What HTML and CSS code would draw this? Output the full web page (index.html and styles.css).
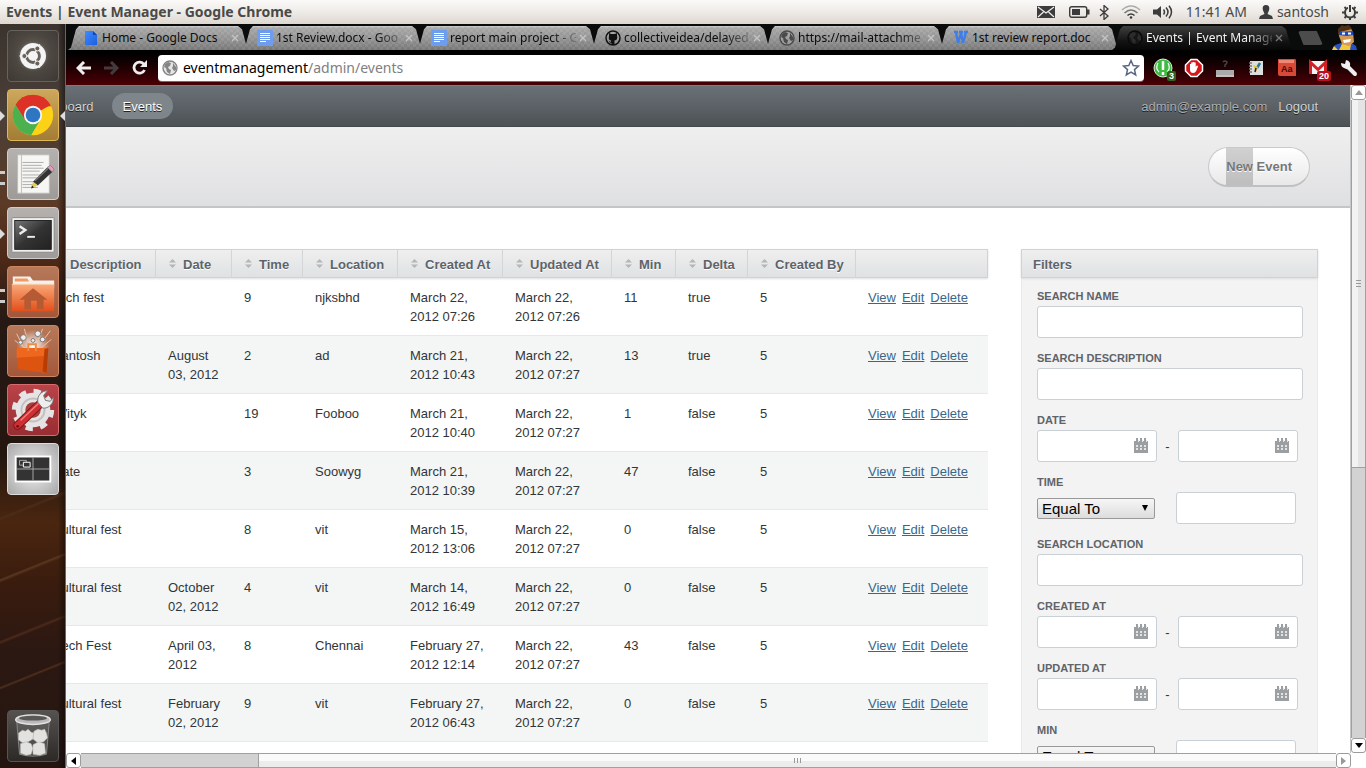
FILE: index.html
```html
<!DOCTYPE html>
<html lang="en">
<head>
<meta charset="utf-8">
<title>Events | Event Manager</title>
<link rel="stylesheet" href="styles.css">
</head>
<body>
<svg class="defs" aria-hidden="true">
  <defs>
    <linearGradient id="bluedoc" x1="0" y1="0" x2="1" y2="1"><stop offset="0" stop-color="#3f8bff"/><stop offset="1" stop-color="#1c5fe0"/></linearGradient>
    <linearGradient id="orange" x1="0" y1="0" x2="0" y2="1"><stop offset="0" stop-color="#f9a878"/><stop offset="1" stop-color="#e2501a"/></linearGradient>
    <linearGradient id="screen" x1="0" y1="0" x2="1" y2="1"><stop offset="0" stop-color="#777"/><stop offset=".5" stop-color="#333"/><stop offset="1" stop-color="#222"/></linearGradient>
    <radialGradient id="burst"><stop offset="0" stop-color="#fff"/><stop offset="1" stop-color="#fff" stop-opacity="0"/></radialGradient>
  </defs>
  <symbol id="i-cal" viewBox="0 0 14 15"><path d="M0 3h14v12H0z" fill="#9b9fa2"/><path d="M2 0h2v4H2zM6 0h2v4H6zM10 0h2v4h-2z" fill="#9b9fa2"/><path d="M4 2h1v2H4zM8 2h1v2H8zM12 2h1v2h-1z" fill="#e6e8e9"/><path d="M2 7h2v2H2zM6 7h2v2H6zM10 7h2v2h-2zM2 10h2v2H2zM6 10h2v2H6zM10 10h2v2h-2z" fill="#e3e4e5"/></symbol>
  <symbol id="i-globe" viewBox="0 0 16 16"><circle cx="8" cy="8" r="7" fill="#b5b5b5" fill-opacity=".35" stroke="currentColor" stroke-width="1.4"/><path d="M3 4l3-2 3 1-1 3-2 1 1 2 2 1-1 4-3-2-1-4-2-1zM11 3l3 4v3l-2 1-2-3 1-2z" fill="currentColor"/></symbol>
  <symbol id="i-globe-dark" viewBox="0 0 16 16"><circle cx="8" cy="8" r="7" fill="#161616" stroke="#0a0a0a" stroke-width="1.4"/><path d="M3 4l3-2 3 1-1 3-2 1 1 2 2 1-1 4-3-2-1-4-2-1zM11 3l3 4v3l-2 1-2-3 1-2z" fill="#2c2c2c"/></symbol>
  <symbol id="i-doc" viewBox="0 0 16 16"><path d="M0 0h16v16H0z" fill="#6d9eee"/><path d="M3 3.5h10M3 5.5h10M3 7.5h10M3 9.5h10M3 11.5h6" stroke="#fff" stroke-width="1.1"/></symbol>
  <symbol id="i-x" viewBox="0 0 8 8"><path d="M1 1l6 6M7 1L1 7" stroke="currentColor" stroke-width="1.4"/></symbol>
  <symbol id="i-sort" viewBox="0 0 7 9"><path d="M3.5 0L7 3.5H0zM0 5.5h7L3.5 9z" fill="#b4b6b8"/></symbol>
</svg>

<header class="panel">
  <h1 class="panel-title">Events | Event Manager - Google Chrome</h1>
  <div class="indicators">
    <svg class="ind-mail" width="18" height="12" viewBox="0 0 18 12"><path d="M0 0h18v12H0z" fill="#3c3c3c"/><path d="M1 1l8 6 8-6M1 11l5.500-5M17 11l-5.500-5" stroke="#eee" stroke-width="1.200" fill="none"/></svg>
    <svg class="ind-batt" width="21" height="12" viewBox="0 0 21 12"><rect x=".7" y=".7" width="17" height="10.600" rx="2" fill="none" stroke="#3c3c3c" stroke-width="1.400"/><path d="M3 3h8v6H3zM18 3.500h2.500v5H18z" fill="#3c3c3c"/></svg>
    <svg class="ind-bt" width="10" height="15" viewBox="0 0 10 15"><path d="M1 4l8 7-4 3.500v-14L9 4l-8 7" stroke="#3c3c3c" stroke-width="1.300" fill="none"/></svg>
    <svg class="ind-wifi" width="20" height="14" viewBox="0 0 20 14"><g fill="none" stroke-width="1.600"><path d="M1 5q9-8 18 0" stroke="#aaa"/><path d="M3.500 8q6.500-6 13 0" stroke="#777"/><path d="M6.500 10.500q3.500-3 7 0" stroke="#3c3c3c"/></g><circle cx="10" cy="12.500" r="1.300" fill="#3c3c3c"/></svg>
    <svg class="ind-vol" width="20" height="14" viewBox="0 0 20 14"><path d="M0 4.500h4L8 1v12L4 9.500H0z" fill="#3c3c3c"/><path d="M10.500 4.500q2 2.500 0 5M13 2.500q4 4.500 0 9M16 .8q5 6.200 0 12.400" stroke="#3c3c3c" stroke-width="1.500" fill="none"/></svg>
    <span class="clock">11:41 AM</span>
    <svg class="ind-user" width="14" height="14" viewBox="0 0 14 14"><path d="M7 0c4 0 3.800 4 2.500 6.500L8.500 9l4.500 2 1 3H0l1-3 4.500-2-1-2.500C3.200 4 3 0 7 0z" fill="#3c3c3c"/></svg>
    <span class="username">santosh</span>
    <svg class="ind-power" width="16" height="16" viewBox="0 0 16 16"><circle cx="8" cy="8.500" r="5" fill="none" stroke="#3c3c3c" stroke-width="2"/><path d="M8 1v7" stroke="#eeebe7" stroke-width="4"/><path d="M8 1v7M0 8.500h3M13 8.500h3M8 13v3M2.500 3l2 2M13.500 3l-2 2M2.500 14l2-2M13.500 14l-2-2" stroke="#3c3c3c" stroke-width="2"/></svg>
  </div>
</header>

<div class="desktop">
  <nav class="launcher" aria-label="Launcher">
    <button class="tile dash" aria-label="Dash home"><svg viewBox="0 0 52 52"><circle cx="26" cy="26" r="16" fill="url(#burst)" opacity=".5"/><circle cx="26" cy="26" r="13.500" fill="#f4f4f4"/><circle cx="26" cy="26" r="6.700" fill="none" stroke="#68625c" stroke-width="3"/><path d="M26 26L12 26M26 26l7-12M26 26l7 12" stroke="#f4f4f4" stroke-width="1.500"/><g fill="#68625c" stroke="#f4f4f4" stroke-width="1"><circle cx="17" cy="26" r="2.600"/><circle cx="30.500" cy="18.200" r="2.600"/><circle cx="30.500" cy="33.800" r="2.600"/></g></svg></button>
    <button class="tile chrome run active" aria-label="Google Chrome"><svg viewBox="0 0 52 52"><circle cx="26" cy="26" r="21" fill="#fcd116"/><path d="M26 26L7.800 15.500A21 21 0 0 1 44.200 15.500z" fill="#dd3128"/><path d="M26 17h18.800A21 21 0 0 0 7.800 15.500L18 32z" fill="#dd3128"/><path d="M7.800 15.500A21 21 0 0 0 24 47l9-15-7 3-9-5z" fill="#4bb04e"/><circle cx="26" cy="26" r="9.500" fill="#f6f6f6"/><circle cx="26" cy="26" r="7.600" fill="#2f76c2"/></svg></button>
    <button class="tile grey run2" aria-label="Text editor"><svg viewBox="0 0 52 52"><path d="M10 6h33v40H10z" fill="#f6f6f4" stroke="#bbb"/><path d="M14 6v40" stroke="#eaa"/><path d="M15 14h22M15 17h20M15 20h22M15 23h18M15 27h20M15 30h16M15 34h18M15 37h14M15 40h16" stroke="#999" stroke-width=".8"/><path d="M26 34l15-15 5 5-15 14z" fill="#333"/><path d="M28 33l15-14" stroke="#777" stroke-width="1.500"/><path d="M41 19l3-2 4 4-2 3z" fill="#e89bc0" stroke="#777" stroke-width=".7"/><path d="M26 34l-2 7 7-3z" fill="#e6cf55"/><path d="M24 41l1-3 2 2z" fill="#222"/></svg></button>
    <button class="tile grey run" aria-label="Terminal"><svg viewBox="0 0 52 52"><rect x="4" y="10" width="44" height="36" rx="1" fill="#efefef" stroke="#888"/><rect x="7" y="13" width="38" height="30" fill="url(#screen)" stroke="#222"/><path d="M12 19l6 4-6 4" stroke="#eee" stroke-width="2.500" fill="none"/><path d="M20 30h8" stroke="#eee" stroke-width="2"/></svg></button>
    <button class="tile rust run2" aria-label="Home folder"><svg viewBox="0 0 52 52"><path d="M5 10h18l3 4h22v8H5z" fill="#f6f1ed"/><path d="M7 12h13l2 3H7z" fill="#f19a63"/><path d="M4 18h44v28H4z" fill="url(#orange)"/><path d="M26 22l15 12h-4v10h-7v-9h-6v9h-7V34h-5z" fill="#b65a33"/><path d="M4 18h44" stroke="#fbcda9"/></svg></button>
    <button class="tile rust" aria-label="Software centre"><svg viewBox="0 0 52 52"><circle cx="26" cy="21" r="17" fill="url(#burst)"/><path d="M9 8l7 14M17 3l5 18M44 5l-12 16M36 3l-7 18M45 14l-11 9M7 15l11 8" stroke="#f1c1a4" stroke-width="1"/><g stroke="#777" fill="#eee"><circle cx="16" cy="12" r="3"/><circle cx="31" cy="8" r="3"/><circle cx="26" cy="15" r="2"/><circle cx="36" cy="14" r="2.500"/><circle cx="13" cy="17" r="2"/></g><path d="M9 23h33l-2 26-30-4z" fill="#dd5410"/><path d="M9 23h33l-1 8-32 2z" fill="#ed681e"/><path d="M21 26v-7h8v7" fill="none" stroke="#ef8a43" stroke-width="2"/><path d="M38 24l4-1-2 26-4-2z" fill="#b83c05"/></svg></button>
    <button class="tile red" aria-label="System settings"><svg viewBox="0 0 52 52"><circle cx="26" cy="26" r="18" fill="#e5e3e3"/><circle cx="26" cy="26" r="19.500" fill="none" stroke="#e5e3e3" stroke-width="5" stroke-dasharray="7.500 7.815"/><circle cx="26" cy="26" r="12" fill="none" stroke="#c4c0c0" stroke-width="2"/><circle cx="26" cy="26" r="8" fill="#a5403f"/><path d="M10 42l25-24" stroke="#7a1717" stroke-width="9" stroke-linecap="round"/><path d="M10 42l24-23" stroke="#cf2f33" stroke-width="7" stroke-linecap="round"/><path d="M13 37l19-18" stroke="#ef8180" stroke-width="1.500"/><path d="M31 18c-1-7 4-12 10-12l-4 5 2 5 5 1 3-4c1 6-5 12-11 11z" fill="#eee" stroke="#777"/><circle cx="10" cy="43" r="1.500" fill="#711"/></svg></button>
    <button class="tile silver" aria-label="Workspace switcher"><svg viewBox="0 0 52 52"><rect x="8" y="13" width="36" height="26" fill="#333" stroke="#fff" stroke-width="2"/><path d="M26 14v24M9 26h34" stroke="#aaa"/><path d="M12 17h7v5h-7z" fill="none" stroke="#aaa"/><path d="M16 19h7v5h-7z" fill="#333" stroke="#fff"/></svg></button>
    <button class="tile trash" aria-label="Trash"><svg viewBox="0 0 52 52"><path d="M9 10l3 35q14 4 28 0l3-35z" fill="#888" fill-opacity=".3" stroke="#999" stroke-width=".8"/><g fill="#e2e2e0" stroke="#bdbdba" stroke-width=".6"><path d="M11 23l4-3 3 1 3-2 3 3 3 1-1 6-5 3-6 1-4-3z"/><path d="M27 21l4-2 4 1 3-1 2 4 1 5-4 4-6 1-5-4z"/><path d="M13 34l6-2 5 2 2 5-2 6-5 1-6-2z"/><path d="M26 35l6-3 6 2 1 10-6 2-7-1z"/></g><ellipse cx="26" cy="9" rx="18" ry="5" fill="#b9b9b9" stroke="#e2e2e2" stroke-width="1.500"/><ellipse cx="26" cy="7.500" rx="14.500" ry="2.500" fill="#5a5856"/></svg></button>
  </nav>

  <div class="browser">
    <div class="tabs">
      <div class="tab"><svg class="fav" viewBox="0 0 16 16"><path d="M2 1h8l4 4v10H2z" fill="url(#bluedoc)"/><path d="M10 1l4 4h-4z" fill="#1546a8"/></svg><span class="tab-name">Home - Google Docs</span><button class="close" aria-label="Close tab"><svg><use href="#i-x"/></svg></button></div>
      <div class="tab"><svg class="fav"><use href="#i-doc"/></svg><span class="tab-name">1st Review.docx - Goo</span><button class="close" aria-label="Close tab"><svg><use href="#i-x"/></svg></button></div>
      <div class="tab"><svg class="fav"><use href="#i-doc"/></svg><span class="tab-name">report main project - G</span><button class="close" aria-label="Close tab"><svg><use href="#i-x"/></svg></button></div>
      <div class="tab"><svg class="fav" viewBox="0 0 16 16"><circle cx="8" cy="8" r="7" fill="none" stroke="#111" stroke-width="1.500"/><path d="M4 3l2 1h4l2-1v3q1 4-2.500 4.500V15h-3v-2Q4 13 4 11l2 1v-1.500Q3 10 4 6z" fill="#111"/></svg><span class="tab-name">collectiveidea/delayed</span><button class="close" aria-label="Close tab"><svg><use href="#i-x"/></svg></button></div>
      <div class="tab"><svg class="fav globe"><use href="#i-globe"/></svg><span class="tab-name">https://mail-attachme</span><button class="close" aria-label="Close tab"><svg><use href="#i-x"/></svg></button></div>
      <div class="tab"><svg class="fav" viewBox="0 0 16 16"><path d="M1 2h4M6 2h4M11 2h4M3 2l2 11 3-10 2 10 3-11" fill="none" stroke="#3f7ee8" stroke-width="2.400"/></svg><span class="tab-name whole">1st review report.doc</span><button class="close" aria-label="Close tab"><svg><use href="#i-x"/></svg></button></div>
      <div class="tab current"><svg class="fav"><use href="#i-globe-dark"/></svg><span class="tab-name">Events | Event Manage</span><button class="close" aria-label="Close tab"><svg><use href="#i-x"/></svg></button></div>
      <button class="newtab" aria-label="New tab"></button>
      <svg class="avatar" width="26" height="25" viewBox="0 0 26 25"><path d="M1 25l3-5 6-2 9-1 6 4 1 4z" fill="#2a50c8"/><path d="M8 25l3-6h9l-1 6zM1 25l2-4 4 4z" fill="#f1c93b"/><path d="M9 3l10-1 3 5 1 10-5 4-7-2-3-8z" fill="#d39a55"/><path d="M7 4l4-4 2 1 5-1 3 4-12 3-2 4z" fill="#4d2f14"/><path d="M8 7l14-1v4l-6 1-8-1z" fill="#2049b8"/><path d="M11 7.500h3v2h-3zM17 7.500h3v2h-3z" fill="#fff"/><path d="M12 15l8-1-1 3-6 1z" fill="#fff"/></svg>
    </div>

    <div class="toolbar">
      <button class="tool" aria-label="Back"><svg width="15" height="14" viewBox="0 0 15 14"><path d="M8 1L2 7l6 6M2 7h13" stroke="#eee" stroke-width="3" fill="none"/></svg></button>
      <button class="tool" aria-label="Forward"><svg width="15" height="14" viewBox="0 0 15 14"><path d="M7 1l6 6-6 6M13 7H0" stroke="#443c3c" stroke-width="3" fill="none"/></svg></button>
      <button class="tool" aria-label="Reload"><svg width="15" height="15" viewBox="0 0 15 15"><path d="M12 4.500A5.500 5.500 0 1 0 12.500 10" stroke="#eee" stroke-width="2.800" fill="none"/><path d="M15 0v7H8z" fill="#eee"/></svg></button>
      <div class="omnibox">
        <svg class="fav globe"><use href="#i-globe"/></svg>
        <div class="url" role="textbox" aria-label="Address">eventmanagement<span>/admin/events</span></div>
        <svg width="18" height="18" viewBox="0 0 18 18"><path d="M9 1.500l2.200 5 5.300.5-4 3.600 1.200 5.400L9 13.200 4.300 16l1.200-5.400-4-3.600 5.300-.5z" fill="none" stroke="#5a6784" stroke-width="1.500"/></svg>
      </div>
      <div class="exts">
        <button class="ext" aria-label="Alerts"><svg viewBox="0 0 20 20"><circle cx="10" cy="10" r="9" fill="#3fba43" stroke="#d9f3d9"/><path d="M10 3v9M10 14v3" stroke="#fff" stroke-width="2.500"/><path d="M5 5q-3 5 1 9M15 5q3 5-1 9" fill="none" stroke="#fff" stroke-width="1.200"/></svg><b class="badge green">3</b></button>
        <button class="ext" aria-label="Ad blocker"><svg viewBox="0 0 20 20"><path d="M7 1.500h6L18.500 7v6L13 18.500H7L1.500 13V7z" fill="#d5161b" stroke="#fff" stroke-width="1.500"/><path d="M6 10V6h1.200v3V4.500h1.500V9 4h1.500v5-4.500h1.500V9l1-1.500 1.500.5-2 5q-1 2-3 2-3 0-3.200-3z" fill="#fff"/></svg></button>
        <button class="ext" aria-label="Unknown device"><svg viewBox="0 0 20 20"><path d="M1 12h18v5H1z" fill="#aaa"/><path d="M1 18h18" stroke="#fff" stroke-width="1.500"/><path d="M8 4q2-2 4 0 0 2-2 3v2" fill="none" stroke="#444" stroke-width="1.500"/></svg></button>
        <button class="ext" aria-label="Notes"><svg viewBox="0 0 20 20"><path d="M4 3h13v14H4z" fill="#ddd"/><path d="M3 5h3M3 8h3M3 11h3M3 14h3" stroke="#777" stroke-width="1.500"/><path d="M14 5l-3 5" stroke="#247a9e" stroke-width="2.500"/><path d="M7 7l5 2-2 5z" fill="#e8c830"/><path d="M10 10l-1 4" stroke="#222" stroke-width="1.500"/></svg></button>
        <button class="ext" aria-label="Dictionary"><svg viewBox="0 0 20 20"><path d="M1 1h17q1 0 1 2v15H3q-2 0-2-2z" fill="#d84a36"/><path d="M2 2h15v3H2z" fill="#f08774"/></svg><span class="aa">Aa</span></button>
        <button class="ext" aria-label="Gmail"><svg viewBox="0 0 20 20"><path d="M1 3h18v13H1z" fill="#f4f4f4"/><path d="M2.500 16V4.500l7.500 7 7.500-7V16" fill="none" stroke="#d22126" stroke-width="3"/></svg><b class="badge">20</b></button>
        <button class="ext" aria-label="Menu"><svg viewBox="0 0 20 20"><path d="M8 8l8 8" stroke="#eee" stroke-width="4" stroke-linecap="round"/><path d="M2 5l4 1 1-4q5 1 4 6t-6 2Q2 9 2 5z" fill="#eee"/></svg></button>
      </div>
    </div>

    <div class="view">
      <div class="page">
        <header class="site-header">
          <nav class="site-nav"><a href="#">Dashboard</a><a href="#" class="here">Events</a></nav>
          <div class="account"><a href="#" class="mail">admin@example.com</a><a href="#">Logout</a></div>
        </header>
        <div class="title-bar"><button class="new-event"><span class="picked">New</span>&nbsp;Event</button></div>
        <main class="main">
          <div class="list">
            <table>
              <colgroup><col class="c-desc"><col class="c-date"><col class="c-time"><col class="c-loc"><col class="c-created"><col class="c-updated"><col class="c-min"><col class="c-delta"><col class="c-by"><col></colgroup>
              <thead><tr>
                <th><svg><use href="#i-sort"/></svg>Description</th><th><svg><use href="#i-sort"/></svg>Date</th><th><svg><use href="#i-sort"/></svg>Time</th><th><svg><use href="#i-sort"/></svg>Location</th><th><svg><use href="#i-sort"/></svg>Created At</th><th><svg><use href="#i-sort"/></svg>Updated At</th><th><svg><use href="#i-sort"/></svg>Min</th><th><svg><use href="#i-sort"/></svg>Delta</th><th><svg><use href="#i-sort"/></svg>Created By</th><th></th>
              </tr></thead>
              <tbody>
                <tr><td>tech fest</td><td></td><td>9</td><td>njksbhd</td><td>March 22, 2012 07:26</td><td>March 22, 2012 07:26</td><td>11</td><td>true</td><td>5</td><td class="acts"><a href="#">View</a><a href="#">Edit</a><a href="#">Delete</a></td></tr>
                <tr><td>santosh</td><td>August 03, 2012</td><td>2</td><td>ad</td><td>March 21, 2012 10:43</td><td>March 22, 2012 07:27</td><td>13</td><td>true</td><td>5</td><td class="acts"><a href="#">View</a><a href="#">Edit</a><a href="#">Delete</a></td></tr>
                <tr><td>IVityk</td><td></td><td>19</td><td>Fooboo</td><td>March 21, 2012 10:40</td><td>March 22, 2012 07:27</td><td>1</td><td>false</td><td>5</td><td class="acts"><a href="#">View</a><a href="#">Edit</a><a href="#">Delete</a></td></tr>
                <tr><td>date</td><td></td><td>3</td><td>Soowyg</td><td>March 21, 2012 10:39</td><td>March 22, 2012 07:27</td><td>47</td><td>false</td><td>5</td><td class="acts"><a href="#">View</a><a href="#">Edit</a><a href="#">Delete</a></td></tr>
                <tr><td>cultural fest</td><td></td><td>8</td><td>vit</td><td>March 15, 2012 13:06</td><td>March 22, 2012 07:27</td><td>0</td><td>false</td><td>5</td><td class="acts"><a href="#">View</a><a href="#">Edit</a><a href="#">Delete</a></td></tr>
                <tr><td>cultural fest</td><td>October 02, 2012</td><td>4</td><td>vit</td><td>March 14, 2012 16:49</td><td>March 22, 2012 07:27</td><td>0</td><td>false</td><td>5</td><td class="acts"><a href="#">View</a><a href="#">Edit</a><a href="#">Delete</a></td></tr>
                <tr><td>Tech Fest</td><td>April 03, 2012</td><td>8</td><td>Chennai</td><td>February 27, 2012 12:14</td><td>March 22, 2012 07:27</td><td>43</td><td>false</td><td>5</td><td class="acts"><a href="#">View</a><a href="#">Edit</a><a href="#">Delete</a></td></tr>
                <tr><td>cultural fest</td><td>February 02, 2012</td><td>9</td><td>vit</td><td>February 27, 2012 06:43</td><td>March 22, 2012 07:27</td><td>0</td><td>false</td><td>5</td><td class="acts"><a href="#">View</a><a href="#">Edit</a><a href="#">Delete</a></td></tr>
              </tbody>
            </table>
          </div>
          <aside class="filters">
            <h2>Filters</h2>
            <form>
              <div class="field"><label for="f-name">Search Name</label><input id="f-name" type="text"></div>
              <div class="field"><label for="f-desc">Search Description</label><input id="f-desc" type="text"></div>
              <div class="field"><label for="f-date">Date</label><div class="range"><span class="date"><input id="f-date" type="text"><svg><use href="#i-cal"/></svg></span><span class="dashmark">-</span><span class="date"><input type="text" aria-label="Date to"><svg><use href="#i-cal"/></svg></span></div></div>
              <div class="field"><label for="f-time">Time</label><div class="compare"><span class="drop"><select id="f-time"><option>Equal To</option></select></span><input type="text" aria-label="Time value"></div></div>
              <div class="field"><label for="f-loc">Search Location</label><input id="f-loc" type="text"></div>
              <div class="field"><label for="f-cr">Created At</label><div class="range"><span class="date"><input id="f-cr" type="text"><svg><use href="#i-cal"/></svg></span><span class="dashmark">-</span><span class="date"><input type="text" aria-label="Created to"><svg><use href="#i-cal"/></svg></span></div></div>
              <div class="field"><label for="f-up">Updated At</label><div class="range"><span class="date"><input id="f-up" type="text"><svg><use href="#i-cal"/></svg></span><span class="dashmark">-</span><span class="date"><input type="text" aria-label="Updated to"><svg><use href="#i-cal"/></svg></span></div></div>
              <div class="field"><label for="f-min">Min</label><div class="compare"><span class="drop"><select id="f-min"><option>Equal To</option></select></span><input type="text" aria-label="Min value"></div></div>
            </form>
          </aside>
        </main>
      </div>
      <div class="vbar">
        <span class="cap"><svg width="8" height="5" viewBox="0 0 8 5"><path d="M4 0l4 5H0z" fill="#999"/></svg></span>
        <span class="thumb"><i></i><i></i><i></i></span>
        <span class="track"></span>
        <span class="cap"><svg width="8" height="5" viewBox="0 0 8 5"><path d="M0 0h8L4 5z" fill="#000"/></svg></span>
      </div>
      <div class="hbar">
        <span class="cap"><svg width="5" height="8" viewBox="0 0 5 8"><path d="M5 0v8L0 4z" fill="#000"/></svg></span>
        <span class="track"></span>
        <span class="thumb"><i></i><i></i><i></i></span>
        <span class="cap"><svg width="5" height="8" viewBox="0 0 5 8"><path d="M0 0v8l5-4z" fill="#999"/></svg></span>
      </div>
      <div class="corner"></div>
    </div>
  </div>
</div>
</body>
</html>
```
FILE: styles.css
```css
* { box-sizing: border-box; }
body { margin: 0; height: 100vh; display: flex; flex-direction: column; overflow: hidden; background: #fff; font: 13px/19px "Liberation Sans", Arial, sans-serif; color: #323537; }
button { font: inherit; padding: 0; border: 0; background: none; color: inherit; display: block; }
svg { display: block; flex: none; }
.defs { position: absolute; width: 0; height: 0; }

/* Desktop panel */
.panel { flex: none; height: 24px; display: flex; align-items: center; justify-content: space-between; padding: 0 8px 0 6px; background: linear-gradient(#fbfaf9, #eeebe7 50%, #ded7cf); font: 14px/24px "Noto Sans", sans-serif; color: #4a4a48; }
.panel-title { margin: 0; font: bold 14px/24px "Noto Sans", sans-serif; color: #4a4a48; }
.indicators { display: flex; align-items: center; }
.ind-mail { margin-right: 14px; }
.ind-batt { margin-right: 9px; }
.ind-bt { margin-right: 12px; }
.ind-wifi { margin-right: 12px; }
.ind-vol { margin-right: 13px; }
.clock { margin-right: 12px; }
.ind-user { margin-right: 4px; }
.username { margin-right: 13px; }

.desktop { flex: 1; min-height: 0; display: flex; }

/* Launcher */
.launcher { flex: none; width: 66px; padding: 6px 0 6px 7px; display: flex; flex-direction: column; gap: 7px; border-right: 1px solid #6e6560;
  background:
    linear-gradient(90deg, transparent 58px, rgba(10, 5, 3, .5)),
    linear-gradient(158deg, transparent 64%, #4c2c18 64.200%, transparent 64.600%, transparent 72%, #5a371f 72.200%, transparent 72.600%, transparent 80%, #4b2a1b 80.300%, transparent 80.600%, transparent 86%, #4f2e1c 86.200%, transparent 86.500%),
    linear-gradient(#3b332e 0, #4a3f37 12%, #5b3a26 24%, #4b2817 32%, #261914 40%, #24160f 58%, #4a2610 67%, #3a1c0e 75%, #2c1812 84%, #241511); }
.tile { flex: none; position: relative; width: 52px; height: 52px; border-radius: 4px; border: 1px solid #aaa; }
.tile svg { width: 50px; height: 50px; }
.dash { border-color: #68625d; background: radial-gradient(circle at 50% 45%, #6d665f, #4d4742 50%, #3d3833); }
.chrome { border-color: #e0b657; background: linear-gradient(#cda75c, #a37d34); }
.grey { border-color: #cfcdcc; background: linear-gradient(#b4b1af, #9e9a98); }
.rust { border-color: #cd8661; background: linear-gradient(#b6795a, #a3573a); }
.red { border-color: #d76a6d; background: linear-gradient(#b94348, #982d33); }
.silver { border-color: #ddd; background: radial-gradient(#f3f3f3, #a7a7a7); }
.trash { margin-top: auto; border-color: #555; background: linear-gradient(#55524f, #2c2927); }
.run::before, .run2::before { content: ""; position: absolute; left: -8px; top: 21px; border: 5px solid transparent; border-left-color: #ddd; border-right: 0; }
.run2::before { top: 22px; width: 5px; height: 8px; border: solid #ccc; border-width: 3px 0; }
.active::after { content: ""; position: absolute; right: -7px; top: 21px; border: 5px solid transparent; border-right-color: #ddd; border-left: 0; }

/* Browser chrome */
.browser { flex: 1; min-width: 0; display: flex; flex-direction: column; }
.tabs { flex: none; height: 26px; padding: 2px 9px 0 2px; display: flex; background: #0a0c0b; font: 12px/22px "Noto Sans", sans-serif; color: #0c0c0c; }
.tab { flex: 0 1 182px; min-width: 0; height: 24px; margin-right: -8px; padding: 0 11px 0 15px; display: flex; align-items: center; gap: 3px; clip-path: polygon(0 100%, 3px 90%, 8px 14%, 11px 0, calc(100% - 12px) 0, calc(100% - 8px) 14%, calc(100% - 3px) 90%, 100% 100%);
  background: linear-gradient(rgba(255, 255, 255, .4), transparent 2px), repeating-conic-gradient(rgba(255, 255, 255, .08) 0 25%, transparent 0 50%) 0 0 / 6px 6px, linear-gradient(#a9aaa9, #8e8f8e 60%, #777); }
.current { background: linear-gradient(#3f4040, #151515 60%, #060606); color: #f1f1f1; }
.fav { width: 16px; height: 16px; }
.globe { color: #4b4b4b; }
.tab-name { flex: 1; min-width: 0; white-space: nowrap; mask-image: linear-gradient(90deg, #000 80%, rgba(0, 0, 0, .2)); }
.tab:first-child .tab-name, .tab-name.whole { mask-image: none; }
.close { flex: none; color: #c4c4c4; }
.current .close { color: #777; }
.close svg { width: 8px; height: 8px; }
.newtab { flex: none; width: 25px; height: 14px; margin: 5px 0 0 12px; background: #4c4c4c; border-radius: 3px; clip-path: polygon(0 0, 75% 0, 100% 100%, 22% 100%); }
.avatar { margin: -1px 0 0 auto; }
.toolbar { flex: none; height: 35px; display: flex; align-items: center; padding: 0 7px 0 10px; background: linear-gradient(#000 10%, #160002 40%, #4a0006); }
.tool { margin-right: 13px; }
.tool + .tool + .tool { margin-right: 11px; }
.omnibox { flex: 1; min-width: 0; height: 26px; display: flex; align-items: center; gap: 5px; padding: 0 4px; border-radius: 4px; background: #fff; box-shadow: 0 1px 0 #8d6065; }
.omnibox .globe { color: #858585; }
.url { flex: 1; font: 14px/24px "Noto Sans", sans-serif; color: #000; white-space: nowrap; }
.url span { color: #808080; }
.exts { display: flex; gap: 11px; padding-left: 9px; }
.ext { position: relative; width: 20px; height: 20px; }
.ext svg { width: 20px; height: 20px; }
.badge { position: absolute; right: -3px; bottom: -3px; padding: 0 2px; border-radius: 2px; background: #b80f22; color: #fff; font: bold 9px/10px "Liberation Sans", sans-serif; }
.green { background: #35601f; }
.aa { position: absolute; left: 4px; top: 6px; color: #3c0906; font: bold 9px/10px "Liberation Sans", sans-serif; }

/* Viewport and scroll bars */
.view { flex: 1; min-height: 0; display: grid; grid-template: minmax(0, 1fr) 15px / minmax(0, 1fr) 15px; }
.page { overflow: hidden; border-right: 1px solid #c4c6c7; }
.vbar, .hbar { display: flex; background: #fff; }
.vbar { flex-direction: column; }
.cap { flex: none; width: 15px; height: 15px; display: flex; align-items: center; justify-content: center; border: 1px solid #9b9b9b; border-radius: 3px; background: #fff; }
.vbar .track { flex: 270; border: solid #a0a0a0; border-width: 1px 1px 0; background: #d2d2d2; }
.vbar .thumb { flex: 368; flex-direction: column; border: solid #a0a0a0; border-width: 0 1px; background: linear-gradient(90deg, #f2f2f2 50%, #e4e4e4 50%); }
.hbar .track { flex: 177; border: solid #a0a0a0; border-width: 1px 1px 1px 0; background: #d2d2d2; }
.hbar .thumb { flex: 1078; border: solid #a0a0a0; border-width: 1px 0; background: linear-gradient(#fafafa 50%, #ececec 50%); }
.thumb { display: flex; align-items: center; justify-content: center; gap: 2px; }
.vbar i { width: 5px; height: 1px; background: #999; }
.hbar i { width: 1px; height: 5px; background: #999; }
.corner { background: #fff; }

/* Admin page */
.site-header { height: 42px; display: flex; align-items: center; justify-content: space-between; padding: 0 32px 0 0; border-top: 1px solid #777d82; border-bottom: 1px solid #45494c; background: linear-gradient(#6a7176, #4d5256); }
.site-header a { color: #d0d3d5; text-decoration: none; text-shadow: 0 1px 0 #222; }
.site-nav { display: flex; align-items: center; gap: 18px; margin-left: -36px; }
.site-header .here { padding: 4px 11px 3px; border-radius: 13px; background: #7f868b; color: #fff; }
.account { display: flex; gap: 11px; }
.site-header .mail { color: #aaadaf; }
.title-bar { height: 81px; display: flex; align-items: center; justify-content: flex-end; padding: 0 40px 0 0; border-top: 1px solid #eee; border-bottom: 2px solid #c3c5c6; background: linear-gradient(#efefef, #dfe0e2); }
.new-event { height: 40px; padding: 0 17px; display: flex; align-items: center; border: 1px solid #c8c9ca; border-bottom: 2px solid #bfc0c1; border-radius: 20px; background: linear-gradient(#fff, #e8e8e8); color: #777; font-weight: bold; text-shadow: 0 1px 0 #fff; }
.picked { padding: 9px 0; background: rgba(0, 0, 0, .18); }
.main { display: flex; align-items: flex-start; gap: 33px; padding: 41px 32px 0 0; }
.list { flex: 1; min-width: 0; margin-left: -23px; }
table { width: 100%; table-layout: fixed; border-collapse: separate; border-spacing: 0; }
.c-desc { width: 113px; }
.c-date { width: 76px; }
.c-time { width: 71px; }
.c-loc { width: 95px; }
.c-created { width: 105px; }
.c-updated { width: 109px; }
.c-min { width: 64px; }
.c-delta { width: 72px; }
.c-by { width: 108px; }
th, h2 { background: linear-gradient(#efefef, #dfe1e2); border: solid #d0d2d3; border-width: 1px 1px 1px 0; box-shadow: 0 1px 2px #ddd; color: #5e6469; font: bold 13px/18px "Liberation Sans", Arial, sans-serif; text-align: left; text-shadow: 0 1px 0 #fff; }
th { height: 29px; padding: 6px 0 3px 13px; white-space: nowrap; }
th svg { display: inline-block; width: 7px; height: 9px; margin: 0 7px 1px 0; }
td { height: 58px; padding: 10px 8px 9px 12px; border-bottom: 1px solid #e8e8e8; vertical-align: top; }
tbody tr:nth-child(even) { background: #f4f5f5; }
.acts { white-space: nowrap; }
.acts a { margin-right: 6px; color: #38678b; }

.filters { flex: none; width: 297px; background: #f3f3f3; border: solid #e9e9e9; border-width: 0 1px; }
.filters h2 { margin: 0 -1px; height: 29px; padding: 6px 12px 4px 11px; border-left-width: 1px; }
.filters form { padding: 9px 14px 12px 15px; }
.field { height: 62px; }
label { display: block; height: 19px; font: bold 11px/18px "Liberation Sans", Arial, sans-serif; color: #5e6469; text-transform: uppercase; }
input { width: 100%; height: 32px; padding: 0 8px; border: 1px solid #c9d0d6; border-radius: 3px; background: #fff; font: inherit; }
.range, .compare { display: flex; align-items: center; }
.date { position: relative; width: 120px; }
.date svg { position: absolute; right: 9px; top: 8px; width: 14px; height: 15px; }
.dashmark { width: 21px; text-align: center; }
.drop { position: relative; width: 118px; margin-right: 21px; }
.drop::after { content: ""; position: absolute; right: 7px; top: 7px; border: 3px solid transparent; border-top: 6px solid #000; border-bottom: 0; }
.compare input { width: 120px; }
select { display: block; width: 100%; height: 21px; padding: 0 4px; appearance: none; border: 1px solid #999; border-radius: 2px; background: linear-gradient(#f6f6f6, #ddd); color: #000; font: 15px/19px "Liberation Sans", Arial, sans-serif; }
```
